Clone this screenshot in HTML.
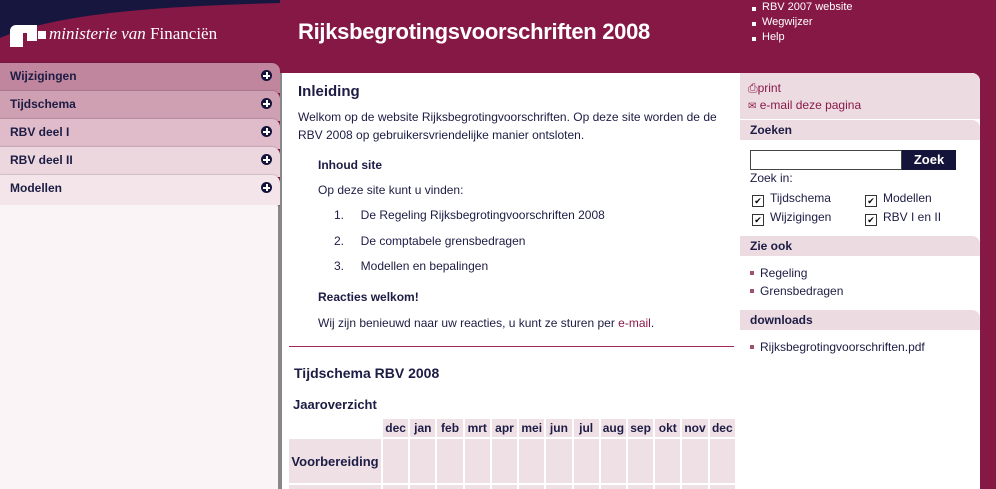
<!DOCTYPE html>
<html><head><meta charset="utf-8"><style>
*{margin:0;padding:0;box-sizing:border-box}
html,body{width:996px;height:489px;overflow:hidden}
body{background:#861846;font-family:"Liberation Sans",Arial,sans-serif;color:#1c1c44;font-size:12px;position:relative}
.a{position:absolute}
.menu div{position:absolute;left:0;width:280px;height:30px;border-radius:0 8px 0 0;padding:6px 10px;font-weight:bold;font-size:12px;color:#1c1c44;box-shadow:0 -1px 1px rgba(0,0,0,.12)}
.plus{position:absolute;right:8px;top:7px;width:11px;height:11px;border-radius:50%;background:#14143a}
.plus:before{content:"";position:absolute;left:2px;top:4.5px;width:7px;height:2px;background:#fff}
.plus:after{content:"";position:absolute;left:4.5px;top:2px;width:2px;height:7px;background:#fff}
.main p{position:absolute;line-height:18px}
.rc{font-size:12px}
.hd{position:absolute;left:740px;width:240px;height:20px;background:#ecdbe1;font-weight:bold;padding:3px 10px;border-radius:0 8px 0 0}
.cb{display:inline-block;width:12px;height:12px;border:1px solid #333;background:#fff;font-size:9px;line-height:10px;text-align:center;vertical-align:-2px;margin-right:6px;color:#000}
ul.sq{list-style:none}
ul.sq li{position:relative;padding-left:10px;line-height:18px}
ul.sq li:before{content:"";position:absolute;left:0;top:7px;width:4px;height:4px;background:#a05070}
ul.w li:before{background:#fff}
table{border-collapse:separate;border-spacing:2px;position:absolute;left:287px;top:417px;font-size:12px;table-layout:fixed;width:450px}
td,th{background:#efe0e6}
th{height:18px;font-weight:bold;padding:0;font-size:12px;text-align:center}
</style></head><body>
<svg class="a" style="left:0;top:0" width="280" height="50"><path d="M0 0H280V3C170 6 60 12 0 38Z" fill="#16163e"/></svg>
<div class="a" style="left:10px;top:25px;width:13px;height:22px;background:#fff;border-radius:6px 0 0 0"></div>
<div class="a" style="left:23px;top:25px;width:14px;height:8px;background:#fff"></div>
<div class="a" style="left:27px;top:33px;width:10px;height:8px;background:#fff"></div>
<div class="a" style="left:38px;top:31px;width:8px;height:8px;background:#fff"></div>
<div class="a" style="left:49px;top:24px;color:#fff;font-family:'Liberation Serif',serif;font-size:17px"><i>ministerie van</i> Financiën</div>
<div class="a" style="left:298px;top:19px;color:#fff;font-size:22px;font-weight:bold;letter-spacing:-0.3px">Rijksbegrotingsvoorschriften 2008</div>
<ul class="a sq w" style="left:752px;top:0px;color:#fff;font-size:11px">
<li style="line-height:15px">RBV 2007 website</li><li style="line-height:15px">Wegwijzer</li><li style="line-height:15px">Help</li></ul>
<div class="a" style="left:0;top:200px;width:280px;height:289px;background:#fbf4f6;border-radius:0 8px 0 0;border-right:2px solid #888"></div>
<div class="menu">
<div style="top:63px;background:#c0869e">Wijzigingen<span class="plus"></span></div>
<div style="top:91px;background:#cf9fb2">Tijdschema<span class="plus"></span></div>
<div style="top:119px;background:#e0bccb">RBV deel I<span class="plus"></span></div>
<div style="top:147px;background:#ecd7de">RBV deel II<span class="plus"></span></div>
<div style="top:175px;background:#f3e5ea">Modellen<span class="plus"></span></div>
</div>
<div class="a" style="left:280px;top:73px;width:460px;height:416px;background:#fff;border-left:2px solid #888"></div>
<div class="a" style="left:740px;top:73px;width:240px;height:416px;background:#fff;border-radius:0 8px 0 0"></div>
<div class="a" style="left:740px;top:73px;width:240px;height:46px;background:#ecdbe1;border-radius:0 8px 0 0"></div>
<div class="main">
<div class="a" style="left:298px;top:83px;font-size:15px;font-weight:bold">Inleiding</div>
<p style="left:298px;top:108px;width:440px">Welkom op de website Rijksbegrotingvoorschriften. Op deze site worden de de RBV 2008 op gebruikersvriendelijke manier ontsloten.</p>
<p style="left:318px;top:156px;font-weight:bold">Inhoud site</p>
<p style="left:318px;top:181px">Op deze site kunt u vinden:</p>
<p style="left:334px;top:206px">1.&nbsp;&nbsp;&nbsp;&nbsp;&nbsp;De Regeling Rijksbegrotingvoorschriften 2008</p>
<p style="left:334px;top:232px">2.&nbsp;&nbsp;&nbsp;&nbsp;&nbsp;De comptabele grensbedragen</p>
<p style="left:334px;top:257px">3.&nbsp;&nbsp;&nbsp;&nbsp;&nbsp;Modellen en bepalingen</p>
<p style="left:318px;top:288px;font-weight:bold">Reacties welkom!</p>
<p style="left:318px;top:314px">Wij zijn benieuwd naar uw reacties, u kunt ze sturen per <span style="color:#8a1a48">e-mail</span>.</p>
</div>
<div class="a" style="left:289px;top:346px;width:445px;height:1px;background:#a0285a"></div>
<div class="a" style="left:294px;top:365px;font-size:14px;font-weight:bold">Tijdschema RBV 2008</div>
<div class="a" style="left:293px;top:397px;font-size:13px;font-weight:bold">Jaaroverzicht</div>
<table>
<colgroup><col style="width:92px"><col span="13"></colgroup>
<tr><th style="background:#fff"></th><th>dec</th><th>jan</th><th>feb</th><th>mrt</th><th>apr</th><th>mei</th><th>jun</th><th>jul</th><th>aug</th><th>sep</th><th>okt</th><th>nov</th><th>dec</th></tr>
<tr style="height:44px"><td style="font-weight:bold;font-size:13px;text-align:center">Voorbereiding</td><td></td><td></td><td></td><td></td><td></td><td></td><td></td><td></td><td></td><td></td><td></td><td></td><td></td></tr>
<tr style="height:10px"><td></td><td></td><td></td><td></td><td></td><td></td><td></td><td></td><td></td><td></td><td></td><td></td><td></td><td></td></tr>
</table>
<div class="a rc" style="left:748px;top:80px;color:#8a1a48;line-height:17px">⎙print<br><span style="font-size:10px">✉</span> e-mail deze pagina</div>
<div class="hd" style="top:120px">Zoeken</div>
<div class="a" style="left:750px;top:150px;width:152px;height:20px;border:1px solid #444;background:#fff"></div>
<div class="a" style="left:902px;top:150px;width:54px;height:20px;background:#14143a;color:#fff;font-weight:bold;font-size:13px;text-align:center;line-height:20px">Zoek</div>
<div class="a rc" style="left:750px;top:171px">Zoek in:</div>
<div class="a rc" style="left:752px;top:189px;line-height:19px"><span class="cb">✔</span>Tijdschema<br><span class="cb">✔</span>Wijzigingen</div>
<div class="a rc" style="left:865px;top:189px;line-height:19px"><span class="cb">✔</span>Modellen<br><span class="cb">✔</span>RBV I en II</div>
<div class="hd" style="top:236px">Zie ook</div>
<ul class="a sq rc" style="left:750px;top:264px"><li>Regeling</li><li>Grensbedragen</li></ul>
<div class="hd" style="top:310px">downloads</div>
<ul class="a sq rc" style="left:750px;top:338px"><li>Rijksbegrotingvoorschriften.pdf</li></ul>
</body></html>
